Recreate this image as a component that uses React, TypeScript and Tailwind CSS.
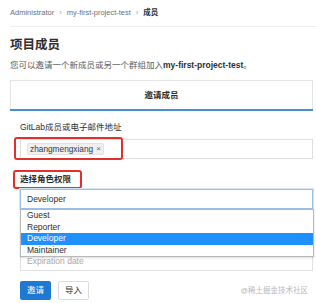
import React from 'react';

export default function App() {
  const roles = ['Guest', 'Reporter', 'Developer', 'Maintainer'];

  return (
    <div className="relative w-[316px] h-[303px] overflow-hidden bg-white text-[#2e2e2e] font-['Liberation_Sans','Noto_Sans_CJK_SC',sans-serif]">
      <div className="pl-[10px]">
        {/* Breadcrumb */}
        <div className="flex h-[27px] items-center gap-[5px] border-b border-[#efefef] text-[7.5px] text-[#707070]">
          <span>Administrator</span>
          <span className="text-[#999]">›</span>
          <span>my-first-project-test</span>
          <span className="text-[#999]">›</span>
          <span className="font-bold text-[#2e2e2e]">成员</span>
        </div>

        {/* Header */}
        <h1 className="mt-[10px] text-[12.5px] leading-[16px] font-bold">项目成员</h1>
        <p className="mt-[6px] text-[8.5px] leading-[12px] text-[#5c5c5c]">
          您可以邀请一个新成员或另一个群组加入<span className="font-bold text-[#2e2e2e]">my-first-project-test</span>。
        </p>

        {/* Tabs */}
        <div className="mt-[9px] w-[303px]">
          <div className="flex h-[29px] items-center justify-center border border-b-0 border-[#e5e5e5] text-[8.5px] font-bold">
            邀请成员
          </div>
          <div className="h-[2px] bg-[#4a8ed6]" />

          <div className="pl-[10px]">
            <div className="mt-[10px] text-[8.5px] leading-[12px]">GitLab成员或电子邮件地址</div>
            <div className="relative mt-[6px] flex h-[20px] items-center border border-[#dfdfdf] pl-[6px]">
              <div className="flex h-[12px] items-center gap-[3px] rounded-[2px] border border-[#e2e2e2] bg-[#f0f0f0] px-[2px] text-[8.3px] text-[#3a3a3a]">
                <span>zhangmengxiang</span>
                <span className="text-[8px] text-[#666]">×</span>
              </div>
              <div className="absolute left-[-7px] top-[-3px] h-[23px] w-[109px] rounded-[3px] border-2 border-[#e2312d]" />
            </div>

            <div className="relative mt-[14px] text-[8.5px] leading-[12px] font-bold">
              选择角色权限
              <div className="absolute left-[-7px] top-[-3px] h-[19px] w-[69px] rounded-[3px] border-2 border-[#e2312d]" />
            </div>

            <div className="relative mt-[4px]">
              <div className="flex h-[20px] items-center border border-[#9cc0e8] pl-[6px] text-[8.5px] shadow-[0_0_0_1px_#d3e4f6]">
                Developer
              </div>
              <div className="absolute left-0 top-full z-10 w-[294px] border border-[#b8b8b8] bg-white shadow-[0_1px_2px_rgba(0,0,0,0.15)]">
                {roles.map((r) => (
                  <div
                    key={r}
                    className={`flex h-[11.5px] items-center pl-[6px] text-[8.5px] ${
                      r === 'Developer' ? 'bg-[#1e90ff] text-white' : 'text-[#2e2e2e]'
                    }`}
                  >
                    {r}
                  </div>
                ))}
              </div>
            </div>

            <div className="mt-[43px] flex h-[19px] items-center border border-[#e2e2e2] pl-[6px] text-[8.5px] text-[#a8a8a8]">
              Expiration date
            </div>

            <div className="mt-[10px] flex gap-[7px]">
              <button className="h-[19px] w-[31px] rounded-[2px] bg-[#1f78d1] text-[8.5px] text-white">邀请</button>
              <button className="h-[19px] w-[31px] rounded-[2px] border border-[#dcdcdc] bg-white text-[8.5px]">导入</button>
            </div>
          </div>
        </div>
      </div>

      <div className="absolute right-[8px] top-[286px] text-[7.5px] leading-[10px] text-[#b8b8b8]">@稀土掘金技术社区</div>
    </div>
  );
}
